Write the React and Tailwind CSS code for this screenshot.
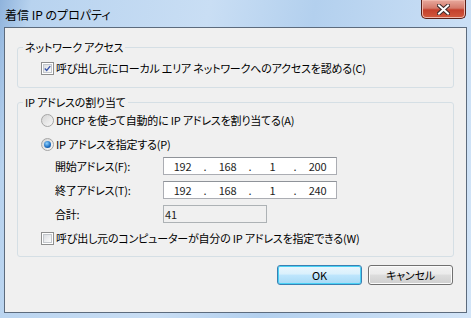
import React from 'react';

const font = "font-['Noto_Sans_CJK_JP','Noto_Sans',sans-serif] [font-feature-settings:'palt']";

function CheckBox({ checked }) {
    return (
        <span className="w-[13px] h-[13px] border border-[#8e8f8f] bg-white flex items-center justify-center shrink-0">
            <span className="w-[9px] h-[9px] border border-[#c3c7cc] bg-gradient-to-br from-[#dbdee2] to-[#fbfbfb] flex items-center justify-center">
                {checked && (
                    <svg width="9" height="9" viewBox="0 0 9 9">
                        <path d="M1 4.5 L3.5 7 L8 1.5" fill="none" stroke="#3b55a8" strokeWidth="1.8" />
                    </svg>
                )}
            </span>
        </span>
    );
}

function Radio({ checked }) {
    return (
        <span className="w-[13px] h-[13px] rounded-full border border-[#a5a5a5] bg-gradient-to-br from-[#d5d5d5] to-[#f8f8f8] flex items-center justify-center shrink-0">
            {checked && (
                <span className="w-[7px] h-[7px] rounded-full bg-[radial-gradient(circle_at_40%_35%,#8fd3ff,#1b6bbf_60%,#0d3f7a)]" />
            )}
        </span>
    );
}

function IpBox({ parts }) {
    return (
        <div className="w-[174px] h-[18px] border border-[#abadb3] border-t-[#8f9399] bg-white flex items-center text-[11px] text-[#1e1e1e]">
            {parts.map((p, i) => (
                <React.Fragment key={i}>
                    <span className="flex-1 text-center">{p}</span>
                    {i < 3 && <span className="w-[8px] text-center">.</span>}
                </React.Fragment>
            ))}
        </div>
    );
}

function Button({ children, primary }) {
    return (
        <button
            className={`w-[85px] h-[20px] rounded-[3px] border text-[11px] text-black flex items-center justify-center ${
                primary
                    ? 'border-[#3c7fb1] shadow-[inset_0_0_0_1px_#48d1f5] bg-[linear-gradient(#eaf6fd_0%,#d9f0fc_45%,#bee6fd_50%,#a7d9f5_100%)]'
                    : 'border-[#707070] shadow-[inset_0_0_0_1px_#fbfbfb] bg-[linear-gradient(#f2f2f2_0%,#ebebeb_45%,#dddddd_50%,#cfcfcf_100%)]'
            }`}
        >
            {children}
        </button>
    );
}

export default function App() {
    return (
        <div className={`w-[471px] h-[318px] flex flex-col bg-[linear-gradient(100deg,#8fb3dc_0%,#b8d3ef_6%,#c9def4_40%,#b3d0ee_60%,#d3e5f8_100%)] ${font}`}>
            {/* title bar */}
            <div className="h-[27px] flex items-start justify-between shrink-0">
                <div className="pl-[5px] pt-[7px] text-[12px] leading-[16px] text-black">着信 IP のプロパティ</div>
                <div className="mr-[5px] w-[45px] h-[19px] rounded-b-[5px] border border-t-0 border-[#5a2018] bg-[linear-gradient(#e8a99d_0%,#d47a6b_45%,#c4402c_55%,#d25a3e_100%)] shadow-[inset_0_0_0_1px_#f0b8ac] flex items-center justify-center">
                    <svg width="13" height="11" viewBox="0 0 13 11">
                        <path d="M2 1.5 L11 9.5 M11 1.5 L2 9.5" stroke="#3b2a2a" strokeWidth="4" strokeLinecap="square" />
                        <path d="M2 1.5 L11 9.5 M11 1.5 L2 9.5" stroke="#ffffff" strokeWidth="2" strokeLinecap="square" />
                    </svg>
                </div>
            </div>

            {/* client area */}
            <div className="mx-[4px] mb-[5px] flex-1 border border-[#5c6b7d] bg-[#f0f0f0] px-[12px] pt-[11px] text-[11px] leading-[16px] tracking-[-0.2px] text-black">
                <fieldset className="border border-[#d5dfe5] rounded-[3px] pl-[5px] pb-[11px] pt-[5px]">
                    <legend className="px-[2px]">ネットワーク アクセス</legend>
                    <label className="pl-[18px] flex items-center gap-[2px]">
                        <CheckBox checked />
                        <span>呼び出し元にローカル エリア ネットワークへのアクセスを認める(C)</span>
                    </label>
                </fieldset>

                <fieldset className="mt-[6px] border border-[#d5dfe5] rounded-[3px] pl-[5px] pb-[10px] pt-[2px]">
                    <legend className="px-[2px]">IP アドレスの割り当て</legend>
                    <div className="pl-[18px] flex flex-col">
                        <label className="flex items-center gap-[2px] h-[16px]">
                            <Radio />
                            <span>DHCP を使って自動的に IP アドレスを割り当てる(A)</span>
                        </label>
                        <label className="mt-[8px] flex items-center gap-[2px] h-[16px]">
                            <Radio checked />
                            <span>IP アドレスを指定する(P)</span>
                        </label>
                        <div className="mt-[5px] pl-[14px] flex flex-col gap-[6px]">
                            <div className="flex items-center">
                                <span className="w-[108px]">開始アドレス(F):</span>
                                <IpBox parts={['192', '168', '1', '200']} />
                            </div>
                            <div className="flex items-center">
                                <span className="w-[108px]">終了アドレス(T):</span>
                                <IpBox parts={['192', '168', '1', '240']} />
                            </div>
                            <div className="flex items-center">
                                <span className="w-[108px]">合計:</span>
                                <div className="w-[104px] h-[18px] border border-[#adb2b5] bg-[#f0f0f0] pl-[1px] flex items-center text-[#222]">41</div>
                            </div>
                        </div>
                        <label className="mt-[7px] flex items-center gap-[2px] h-[16px]">
                            <CheckBox />
                            <span>呼び出し元のコンピューターが自分の IP アドレスを指定できる(W)</span>
                        </label>
                    </div>
                </fieldset>

                <div className="mt-[8px] flex justify-end gap-[6px] pr-[1px]">
                    <Button primary>OK</Button>
                    <Button>キャンセル</Button>
                </div>
            </div>
        </div>
    );
}
